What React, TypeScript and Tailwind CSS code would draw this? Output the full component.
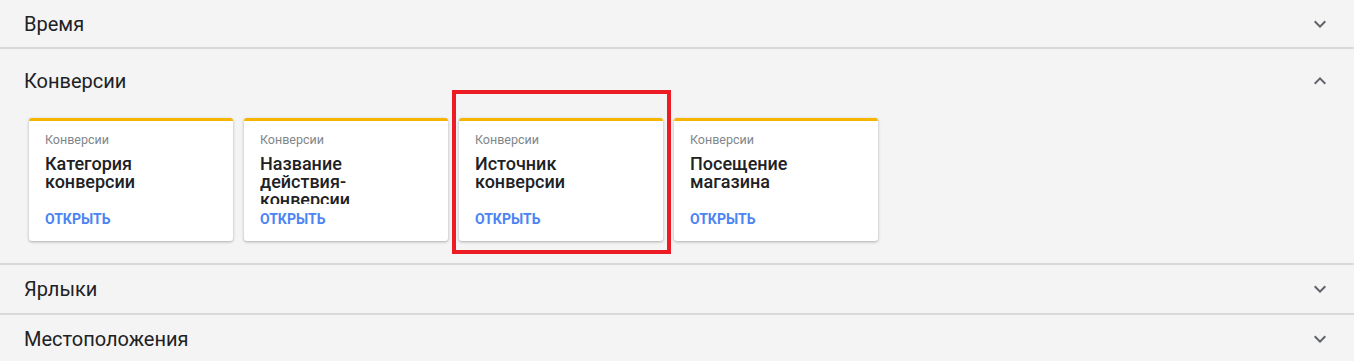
import React from "react";

function Chevron({ up }: { up?: boolean }) {
  return (
    <svg width="24" height="24" viewBox="0 0 24 24" className="shrink-0">
      {up ? (
        <path d="M7.41 15.41 12 10.83l4.59 4.58L18 14l-6-6-6 6z" fill="#5f6368" />
      ) : (
        <path d="M7.41 8.59 12 13.17l4.59-4.58L18 10l-6 6-6-6z" fill="#5f6368" />
      )}
    </svg>
  );
}

function Row({ title, h }: { title: string; h: string }) {
  return (
    <div className={`flex items-center justify-between pl-[24px] pr-[22px] border-b-2 border-[#d9d9d9] ${h}`}>
      <span className="text-[20px] text-[#202124]">{title}</span>
      <Chevron />
    </div>
  );
}

function Card({ title, highlight, clip }: { title: string; highlight?: boolean; clip?: boolean }) {
  return (
    <div className="relative w-[204px] h-[123px] shrink-0">
      {highlight && (
        <div className="absolute left-[-7px] top-[-28px] w-[219px] h-[164px] border-4 border-[#ed1c24]" />
      )}
      <div className="relative w-full h-full bg-white rounded-[3px] border-t-[3px] border-[#f4b400] shadow-[0_1px_3px_rgba(0,0,0,0.3)] px-[16px] pt-[11px] flex flex-col">
        <div className="text-[12.5px] leading-[16px] text-[#80868b]">Конверсии</div>
        <div
          className={`mt-[7px] h-[49px] text-[18px] leading-[18px] font-medium text-[#202124] pr-[30px] ${
            clip ? "overflow-hidden" : ""
          }`}
        >
          {title}
        </div>
        <div className="mt-[7px] text-[14px] leading-[16px] font-bold text-[#4c84f3]">ОТКРЫТЬ</div>
      </div>
    </div>
  );
}

export default function App() {
  return (
    <div className="w-[1354px] h-[361px] overflow-hidden bg-[#f4f4f4]" style={{ fontFamily: "Roboto, 'Liberation Sans', sans-serif" }}>
      <Row title="Время" h="h-[49px]" />
      <div className="border-b-2 border-[#d9d9d9]">
        <div className="flex items-center justify-between pl-[24px] pr-[22px] h-[64px]">
          <span className="text-[20px] text-[#202124]">Конверсии</span>
          <Chevron up />
        </div>
        <div className="flex gap-[11px] pl-[29px] pt-[5px] pb-[22px]">
          <Card title="Категория конверсии" />
          <Card title="Название действия-конверсии" clip />
          <Card title="Источник конверсии" highlight />
          <Card title="Посещение магазина" />
        </div>
      </div>
      <Row title="Ярлыки" h="h-[50px]" />
      <Row title="Местоположения" h="h-[50px]" />
    </div>
  );
}
